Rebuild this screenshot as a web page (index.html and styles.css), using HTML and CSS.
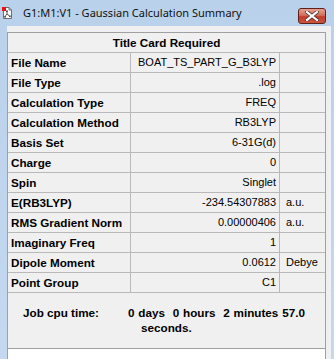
FILE: index.html
```html
<!DOCTYPE html>
<html lang="en">
<head>
    <meta charset="UTF-8">
    <title>G1:M1:V1 - Gaussian Calculation Summary</title>
    <link rel="stylesheet" href="styles.css">
</head>
<body>

    <div class="window">
        <!-- Title bar -->
        <div class="titlebar">
            <svg class="app-icon" width="11" height="14" viewBox="0 0 11 14">
                <path d="M1.5 1.5 H7 L9.5 4 V12.5 H1.5 Z" fill="#fff" stroke="#6e6e6e"/>
                <path d="M7 1.5 V4 H9.5" fill="none" stroke="#6e6e6e"/>
                <path d="M5 5 V8 M5 8 L3 10.5 M5 8 L7.5 10" stroke="#555" fill="none"/>
                <rect x="4" y="4.5" width="2" height="1.5" fill="#555"/>
                <rect x="2.2" y="10" width="1.8" height="1.6" fill="#555"/>
                <rect x="7" y="9.5" width="1.8" height="1.6" fill="#555"/>
                <rect x="0" y="1" width="4" height="4" fill="#e8141a"/>
            </svg>
            <span class="title">G1:M1:V1 - Gaussian Calculation Summary</span>
            <div class="close-btn">
                <svg width="14" height="10" viewBox="0 0 14 10">
                    <path d="M2 1 L12 9 M12 1 L2 9" stroke="#4a3434" stroke-width="3.6" stroke-linecap="square"/>
                    <path d="M2 1 L12 9 M12 1 L2 9" stroke="#fff" stroke-width="2.2" stroke-linecap="square"/>
                </svg>
            </div>
        </div>

        <!-- Client area -->
        <div class="client">
            <div class="summary">
                <div class="row">
                    <div class="cell heading">Title Card Required</div>
                </div>
                <div class="row">
                    <div class="cell label">File Name</div>
                    <div class="cell value">BOAT_TS_PART_G_B3LYP</div>
                    <div class="cell unit"></div>
                </div>
                <div class="row">
                    <div class="cell label">File Type</div>
                    <div class="cell value">.log</div>
                    <div class="cell unit"></div>
                </div>
                <div class="row">
                    <div class="cell label">Calculation Type</div>
                    <div class="cell value">FREQ</div>
                    <div class="cell unit"></div>
                </div>
                <div class="row">
                    <div class="cell label">Calculation Method</div>
                    <div class="cell value">RB3LYP</div>
                    <div class="cell unit"></div>
                </div>
                <div class="row">
                    <div class="cell label">Basis Set</div>
                    <div class="cell value">6-31G(d)</div>
                    <div class="cell unit"></div>
                </div>
                <div class="row">
                    <div class="cell label">Charge</div>
                    <div class="cell value">0</div>
                    <div class="cell unit"></div>
                </div>
                <div class="row">
                    <div class="cell label">Spin</div>
                    <div class="cell value">Singlet</div>
                    <div class="cell unit"></div>
                </div>
                <div class="row">
                    <div class="cell label">E(RB3LYP)</div>
                    <div class="cell value">-234.54307883</div>
                    <div class="cell unit">a.u.</div>
                </div>
                <div class="row">
                    <div class="cell label">RMS Gradient Norm</div>
                    <div class="cell value">0.00000406</div>
                    <div class="cell unit">a.u.</div>
                </div>
                <div class="row">
                    <div class="cell label">Imaginary Freq</div>
                    <div class="cell value">1</div>
                    <div class="cell unit"></div>
                </div>
                <div class="row">
                    <div class="cell label">Dipole Moment</div>
                    <div class="cell value">0.0612</div>
                    <div class="cell unit">Debye</div>
                </div>
                <div class="row">
                    <div class="cell label">Point Group</div>
                    <div class="cell value">C1</div>
                    <div class="cell unit"></div>
                </div>

                <!-- Job cpu time -->
                <div class="cpu">
                    <span class="cpu-label">Job cpu time:</span>
                    <span class="cpu-value">0 days  0 hours  2 minutes 57.0<span class="cpu-wrap">seconds.</span></span>
                </div>
                <div class="blank"></div>
            </div>
        </div>
    </div>

</body>
</html>
```

FILE: styles.css
```css
/* Page */
body {
    margin: 0;
    font-family: "Liberation Sans", Arial, sans-serif;
    background: #bcd3ec;
}

/* Window frame */
.window {
    width: 334px;
    height: 359px;
    display: flex;
    flex-direction: column;
    background: linear-gradient(to bottom, #b9d1ea, #c4d9f0);
    overflow: hidden;
}

/* Title bar */
.titlebar {
    height: 26px;
    display: flex;
    align-items: flex-start;
    position: relative;
}
.app-icon {
    margin: 6px 0 0 2px;
}
.title {
    margin: 5px 0 0 10px;
    font-family: "Noto Sans", "Open Sans", sans-serif;
    font-size: 11px;
    line-height: 16px;
    color: #111;
}
.close-btn {
    position: absolute;
    top: 8px;
    left: 298px;
    width: 26px;
    height: 14px;
    border: 1px solid #5e2119;
    border-radius: 3px;
    background: linear-gradient(to bottom, #e6a091 0%, #d26f5c 45%, #c23c2a 55%, #c9553f 100%);
    display: flex;
    align-items: center;
    justify-content: center;
}

/* Client area */
.client {
    flex: 1;
    margin: 0 3px 0 7px;
    background: #f0f0f0;
    padding-top: 6px;
    display: flex;
}

/* Summary list */
.summary {
    width: 319px;
    box-sizing: border-box;
    border: 1px solid #a0a0a0;
    border-bottom: none;
    display: flex;
    flex-direction: column;
    background: #fff;
}
.row {
    display: grid;
    grid-template-columns: 123px 149px 1fr;
    height: 20px;
    box-sizing: border-box;
    border-bottom: 1px solid #b9b9b9;
    background: #f0f0f0;
    font-size: 11.7px;
    line-height: 19px;
    color: #000;
}
.cell {
    white-space: nowrap;
    overflow: hidden;
}
.heading {
    grid-column: 1 / 4;
    text-align: center;
    font-weight: bold;
}
.label {
    font-weight: bold;
    padding-left: 3px;
    border-right: 1px solid #b9b9b9;
}
.value {
    font-size: 11px;
    text-align: right;
    padding-right: 3px;
    border-right: 1px solid #b9b9b9;
}
.unit {
    font-size: 11px;
    padding-left: 6px;
}

/* Job cpu time block */
.cpu {
    height: 56px;
    box-sizing: border-box;
    border-bottom: 1px solid #a0a0a0;
    background: #f0f0f0;
    padding: 12px 0 0 15px;
    display: grid;
    grid-template-columns: 105px 1fr;
    font-size: 11.7px;
    line-height: 15px;
    font-weight: bold;
    color: #000;
}
.cpu-value {
    white-space: pre;
    word-spacing: 0.6px;
}
.cpu-wrap {
    display: block;
    padding-left: 13px;
    word-spacing: 0;
}
.blank {
    flex: 1;
    background: #fff;
}
```
